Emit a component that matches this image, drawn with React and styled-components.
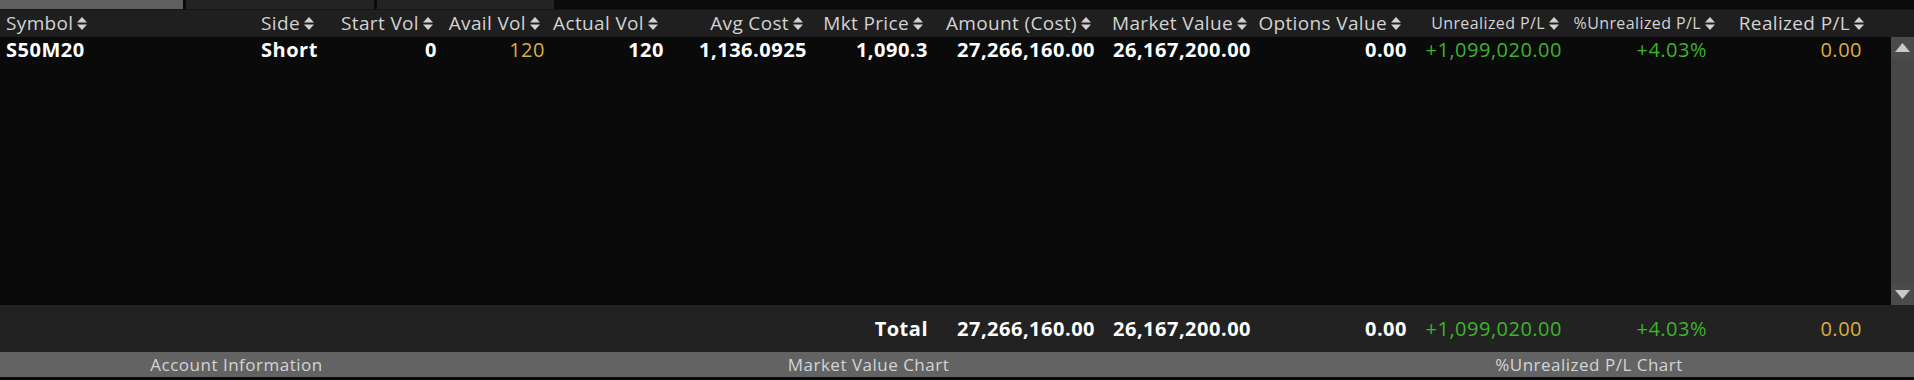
import React from 'react';
import styled, { createGlobalStyle } from 'styled-components';

const Global = createGlobalStyle`
  html, body {
    margin: 0;
    padding: 0;
    background: #0a0a0a;
    font-family: "Open Sans", "Liberation Sans", sans-serif;
  }
`;

// data columns (cell widths) and header columns (header right edges differ from data)
const columns = [
  { key: 'symbol', title: 'Symbol', width: 258, head: 261, align: 'left', pad: 6 },
  { key: 'side', title: 'Side', width: 62, head: 51, align: 'left', pad: 3 },
  { key: 'start', title: 'Start Vol', width: 120, head: 121 },
  { key: 'avail', title: 'Avail Vol', width: 108, head: 107 },
  { key: 'actual', title: 'Actual Vol', width: 119, head: 118 },
  { key: 'avg', title: 'Avg Cost', width: 143, head: 145 },
  { key: 'mkt', title: 'Mkt Price', width: 121, head: 120 },
  { key: 'amount', title: 'Amount (Cost)', width: 167, head: 168 },
  { key: 'mv', title: 'Market Value', width: 156, head: 156 },
  { key: 'opt', title: 'Options Value', width: 156, head: 154 },
  { key: 'upl', title: 'Unrealized P/L', width: 155, head: 158, small: true },
  { key: 'pupl', title: '%Unrealized P/L', width: 145, head: 156, small: true },
  { key: 'rpl', title: 'Realized P/L', width: 155, head: 149 },
];

const dataTemplate = columns.map((c) => `${c.width}px`).join(' ') + ' 1fr';
const headTemplate = columns.map((c) => `${c.head}px`).join(' ') + ' 1fr';

const rows = [
  {
    symbol: 'S50M20',
    side: 'Short',
    start: '0',
    avail: { v: '120', tone: 'gold' },
    actual: '120',
    avg: '1,136.0925',
    mkt: '1,090.3',
    amount: '27,266,160.00',
    mv: '26,167,200.00',
    opt: '0.00',
    upl: { v: '+1,099,020.00', tone: 'green' },
    pupl: { v: '+4.03%', tone: 'green' },
    rpl: { v: '0.00', tone: 'gold' },
  },
];

const total = {
  mkt: 'Total',
  amount: '27,266,160.00',
  mv: '26,167,200.00',
  opt: '0.00',
  upl: { v: '+1,099,020.00', tone: 'green' },
  pupl: { v: '+4.03%', tone: 'green' },
  rpl: { v: '0.00', tone: 'gold' },
};

const tones = { gold: '#dbae3e', green: '#3db42a', white: '#ffffff' };

const Page = styled.div`
  width: 1914px;
  height: 380px;
  display: flex;
  flex-direction: column;
  background: #0a0a0a;
  overflow: hidden;
`;

const TabStrip = styled.div`
  height: 9px;
  display: flex;
  gap: 3px;
  background: #0b0b0b;
  border-bottom: 1px solid #151515;
`;

const Tab = styled.div`
  width: ${(p) => p.w}px;
  background: ${(p) => (p.active ? '#5f5f5f' : '#232323')};
`;

const HeaderRow = styled.div`
  display: grid;
  grid-template-columns: ${headTemplate};
  height: 27px;
  background: #1f1f1f;
  align-items: center;
`;

const HeadCell = styled.div`
  display: flex;
  align-items: center;
  justify-content: ${(p) => (p.align === 'left' ? 'flex-start' : 'flex-end')};
  gap: 4px;
  padding-left: ${(p) => (p.align === 'left' && p.pad > 3 ? p.pad : 0)}px;
  color: #d2d2d2;
  font-size: ${(p) => (p.small ? 16 : 19)}px;
  line-height: 1;
  white-space: nowrap;
  letter-spacing: ${(p) => (p.small ? '0.4px' : '0.35px')};

  svg {
    flex-shrink: 0;
  }
`;

const Body = styled.div`
  display: flex;
  height: 269px;
`;

const Rows = styled.div`
  flex: 1;
  background: #0a0a0a;
`;

const DataRow = styled.div`
  display: grid;
  grid-template-columns: ${dataTemplate};
  height: 26px;
  align-items: center;
`;

const Cell = styled.div`
  text-align: ${(p) => (p.align === 'left' ? 'left' : 'right')};
  padding-left: ${(p) => (p.align === 'left' ? p.pad : 0)}px;
  padding-right: ${(p) => (p.align === 'left' ? 0 : 3)}px;
  color: ${(p) => tones[p.tone || 'white']};
  font-size: 20px;
  line-height: 1;
  font-weight: ${(p) => (p.tone ? 400 : 700)};
  letter-spacing: 0.5px;
  white-space: nowrap;
`;

const Scrollbar = styled.div`
  width: 23px;
  display: flex;
  flex-direction: column;
  justify-content: space-between;
  background: #474747;
`;

const ScrollButton = styled.div`
  height: 22px;
  display: flex;
  align-items: center;
  justify-content: center;
  background: #4b4b4b;
`;

const TotalRow = styled.div`
  display: grid;
  grid-template-columns: ${dataTemplate};
  height: 47px;
  align-items: center;
  background: #222222;
`;

const Footer = styled.div`
  display: grid;
  grid-template-columns: 473px 791px 1fr;
  height: 25px;
  background: #636363;
  border-bottom: 3px solid #0a0a0a;
`;

const FooterTab = styled.div`
  display: flex;
  align-items: center;
  justify-content: center;
  color: #d4d4d4;
  font-size: 17px;
  letter-spacing: 0.5px;
  white-space: nowrap;
`;

const SortIcon = () => (
  <svg width="10" height="15" viewBox="0 0 10 15">
    <path d="M0 6.5 L5 1 L10 6.5 Z" fill="#d2d2d2" />
    <path d="M0 8.5 L5 14 L10 8.5 Z" fill="#d2d2d2" />
  </svg>
);

const Arrow = ({ up }) => (
  <svg width="15" height="9" viewBox="0 0 15 9">
    <path d={up ? 'M0 9 L7.5 0 L15 9 Z' : 'M0 0 L7.5 9 L15 0 Z'} fill="#c9c9c9" />
  </svg>
);

const valueOf = (v) => (v && typeof v === 'object' ? v : { v });

const App = () => {
  return (
    <Page>
      <Global />
      <TabStrip>
        <Tab active w={183} />
        <Tab w={188} />
        <Tab w={177} />
      </TabStrip>
      <HeaderRow>
        {columns.map((c) => (
          <HeadCell key={c.key} align={c.align} pad={c.pad} small={c.small}>
            {c.title}
            <SortIcon />
          </HeadCell>
        ))}
        <div />
      </HeaderRow>
      <Body>
        <Rows>
          {rows.map((r, i) => (
            <DataRow key={i}>
              {columns.map((c) => {
                const { v, tone } = valueOf(r[c.key]);
                return (
                  <Cell key={c.key} align={c.align} pad={c.pad} tone={tone}>
                    {v}
                  </Cell>
                );
              })}
            </DataRow>
          ))}
        </Rows>
        <Scrollbar>
          <ScrollButton>
            <Arrow up />
          </ScrollButton>
          <ScrollButton>
            <Arrow />
          </ScrollButton>
        </Scrollbar>
      </Body>
      <TotalRow>
        {columns.map((c) => {
          const { v, tone } = valueOf(total[c.key]);
          return (
            <Cell key={c.key} align={c.align} pad={c.pad} tone={tone}>
              {v}
            </Cell>
          );
        })}
      </TotalRow>
      <Footer>
        <FooterTab>Account Information</FooterTab>
        <FooterTab>Market Value Chart</FooterTab>
        <FooterTab>%Unrealized P/L Chart</FooterTab>
      </Footer>
    </Page>
  );
};

export default App;
